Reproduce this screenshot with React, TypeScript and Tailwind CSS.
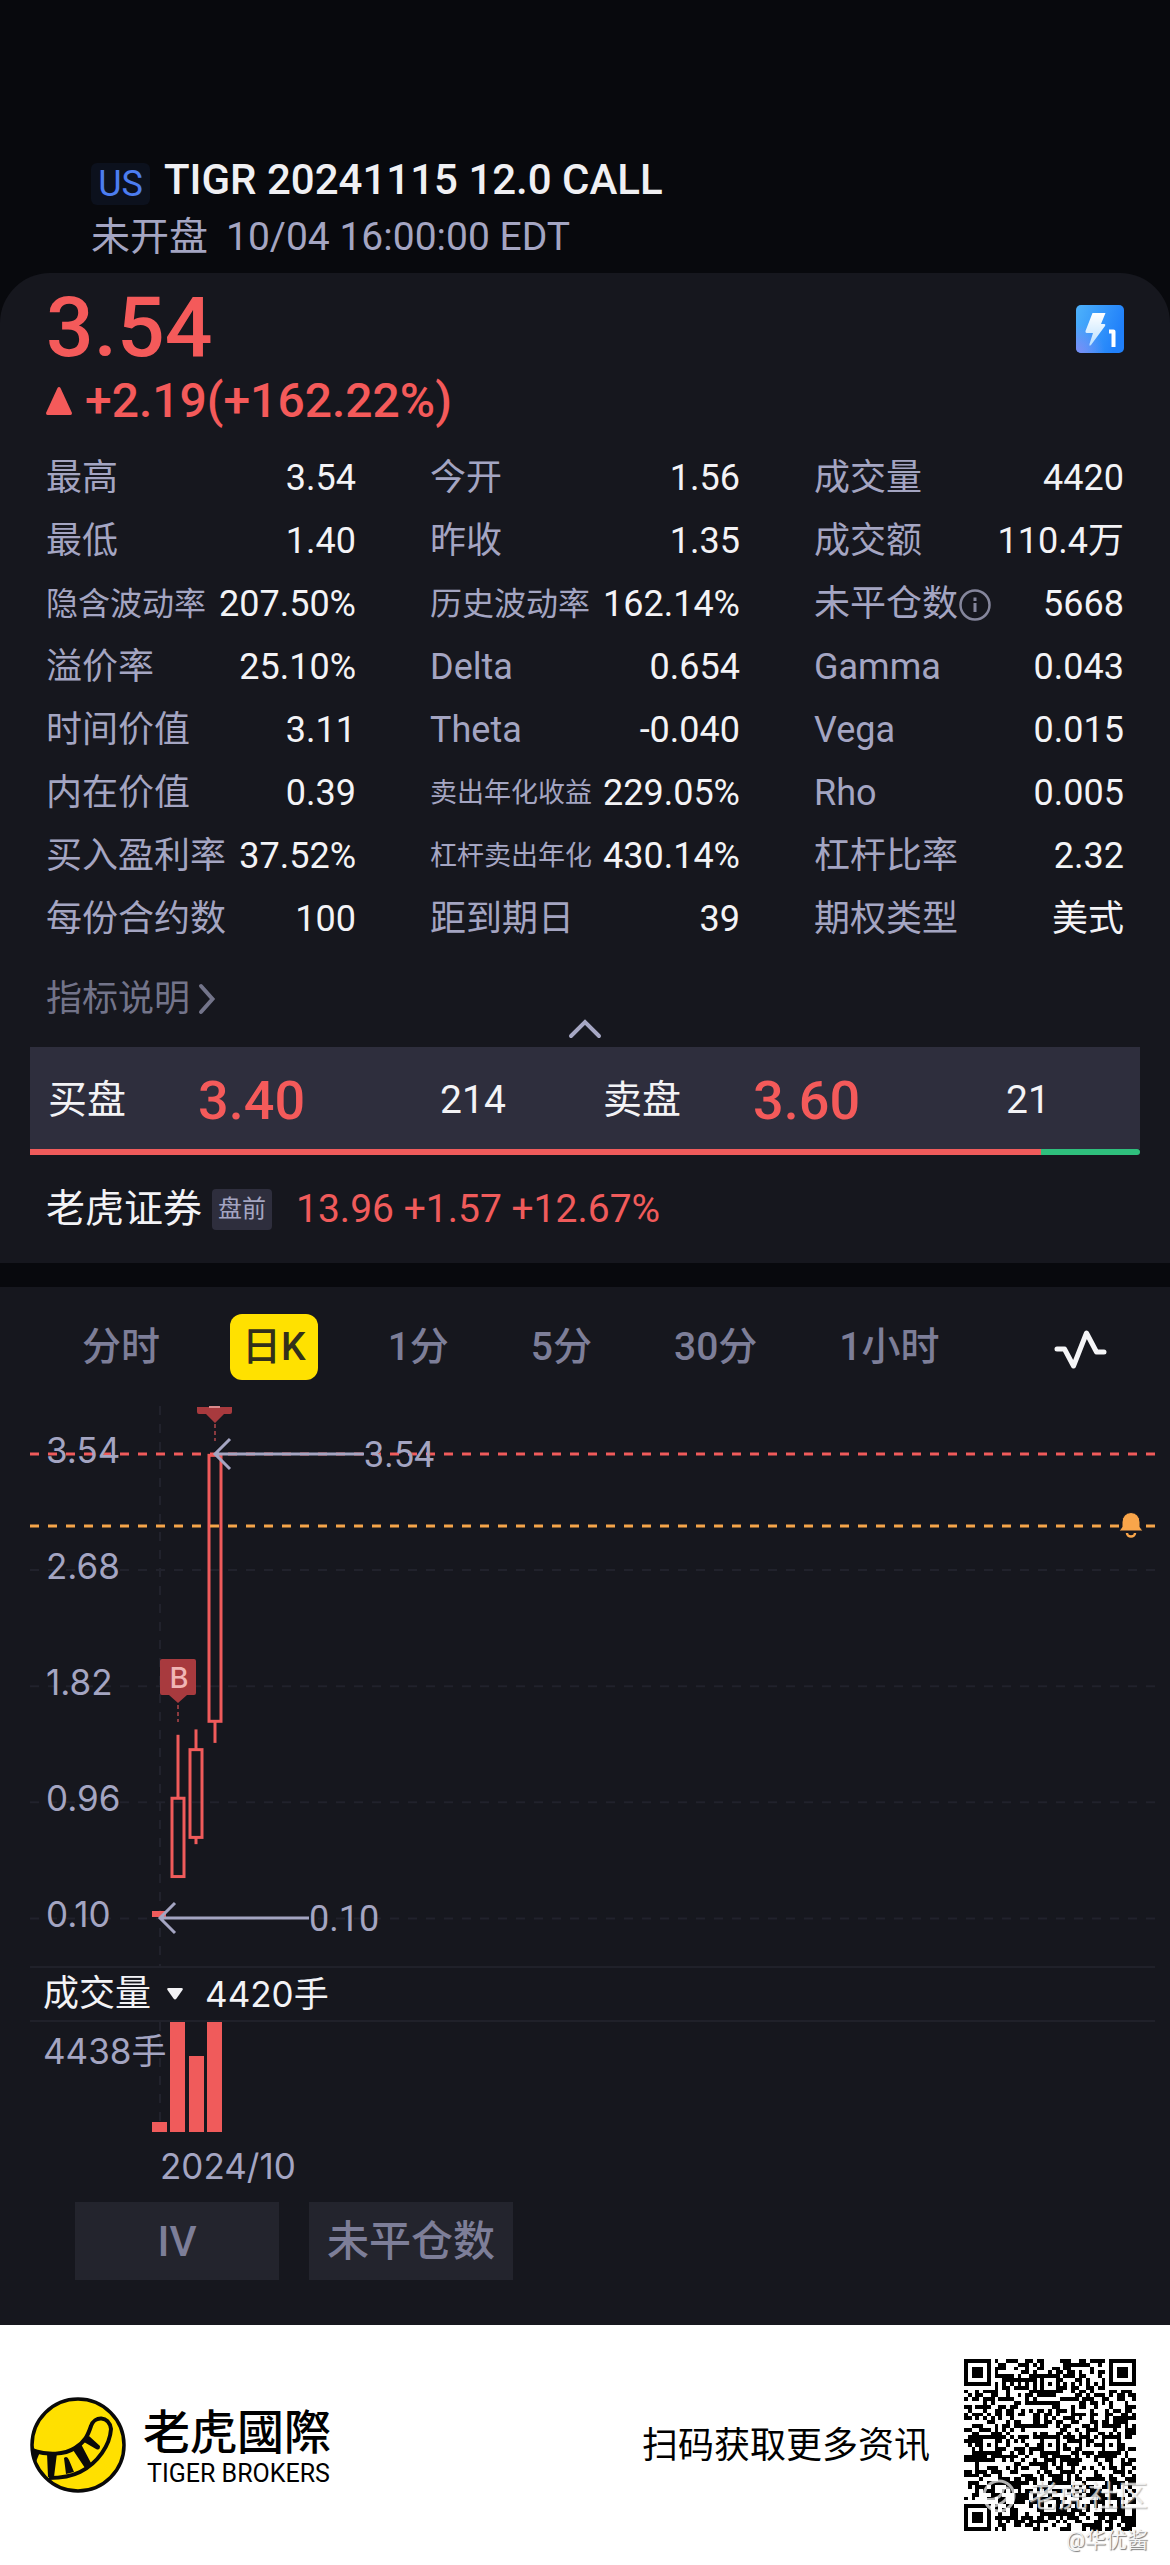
import React from "react";

type Stat = { label: string; value: string; size?: "md" | "sm"; info?: boolean };

const STATS: Stat[] = [
  { label: "最高", value: "3.54" },
  { label: "今开", value: "1.56" },
  { label: "成交量", value: "4420" },
  { label: "最低", value: "1.40" },
  { label: "昨收", value: "1.35" },
  { label: "成交额", value: "110.4万" },
  { label: "隐含波动率", value: "207.50%", size: "md" },
  { label: "历史波动率", value: "162.14%", size: "md" },
  { label: "未平仓数", value: "5668", info: true },
  { label: "溢价率", value: "25.10%" },
  { label: "Delta", value: "0.654" },
  { label: "Gamma", value: "0.043" },
  { label: "时间价值", value: "3.11" },
  { label: "Theta", value: "-0.040" },
  { label: "Vega", value: "0.015" },
  { label: "内在价值", value: "0.39" },
  { label: "卖出年化收益", value: "229.05%", size: "sm" },
  { label: "Rho", value: "0.005" },
  { label: "买入盈利率", value: "37.52%" },
  { label: "杠杆卖出年化", value: "430.14%", size: "sm" },
  { label: "杠杆比率", value: "2.32" },
  { label: "每份合约数", value: "100" },
  { label: "距到期日", value: "39" },
  { label: "期权类型", value: "美式" },
];

const LABEL_SIZE = { md: "text-[32px]", sm: "text-[27px]" };

const TABS = ["分时", "日K", "1分", "5分", "30分", "1小时"];

function Header() {
  return (
    <header className="px-[91px] pt-[155px] pb-3">
      <div className="flex items-end gap-[14px]">
        <span className="flex h-[42px] w-[59px] items-center justify-center rounded-md bg-[#0c111d] text-[36px] text-[#4c7df0]">
          US
        </span>
        <h1 className="text-[42px] leading-[50px] font-medium text-[#f0f0f3]">TIGR 20241115 12.0 CALL</h1>
      </div>
      <p className="mt-2 flex gap-[18px] text-[39px] leading-[48px] text-[#a4a5c2]">
        <span>未开盘</span>
        <span>10/04 16:00:00 EDT</span>
      </p>
    </header>
  );
}

function FlashBadge() {
  return (
    <svg viewBox="0 0 48 48" className="mt-[19px] size-12" role="img" aria-label="Level 1">
      <defs>
        <linearGradient id="flashBg" x1="0" y1="0" x2="1" y2="0.35">
          <stop offset="0" stopColor="#4eb2fb" />
          <stop offset="1" stopColor="#2080fa" />
        </linearGradient>
        <radialGradient id="flashGlow" cx="0" cy="1" r="0.6">
          <stop offset="0" stopColor="#7f8cf5" />
          <stop offset="1" stopColor="#7f8cf5" stopOpacity="0" />
        </radialGradient>
        <linearGradient id="flashBolt" x1="0" y1="0" x2="0" y2="1">
          <stop offset="0" stopColor="#ffffff" />
          <stop offset="1" stopColor="#b9e0ff" />
        </linearGradient>
      </defs>
      <rect width="48" height="48" rx="5" fill="url(#flashBg)" />
      <rect width="48" height="48" rx="5" fill="url(#flashGlow)" />
      <path
        d="M16.500 8H29.500L25 19H28.500Q30 19.500 29 21L15 40Q13 42 13.500 39L17 28H10.500Q9 27.500 9.500 26Z"
        fill="url(#flashBolt)"
      />
      <path d="M33 26.500H37.500V42" fill="none" stroke="#fff" strokeWidth="4" strokeLinejoin="round" />
    </svg>
  );
}

function InfoIcon() {
  return (
    <svg viewBox="0 0 34 34" className="size-[34px]" fill="none" stroke="#85869c" strokeWidth="2.500">
      <circle cx="17" cy="17" r="14.500" />
      <path d="M17 15V24" strokeWidth="3" />
      <path d="M17 9.500V13" strokeWidth="3" />
    </svg>
  );
}

function StatGrid() {
  return (
    <dl className="mt-4 grid grid-cols-3 gap-x-[74px] px-[46px] text-[36px] leading-[63px]">
      {STATS.map((s) => (
        <div key={s.label} className="flex items-center justify-between whitespace-nowrap">
          <dt className={`flex items-center text-[#a4a5c2] ${s.size ? LABEL_SIZE[s.size] : ""}`}>
            {s.label}
            {s.info && (
              <button type="button" aria-label="未平仓数说明">
                <InfoIcon />
              </button>
            )}
          </dt>
          <dd className="text-[#f3f3f6]">{s.value}</dd>
        </div>
      ))}
    </dl>
  );
}

function Quote({ label, price, size }: { label: string; price: string; size: string }) {
  return (
    <div className="flex flex-1 items-center pt-1 pl-[18px] text-[39px] text-[#f3f3f6]">
      <span className="w-[150px]">{label}</span>
      <span className="flex-1 text-[54px] font-medium text-[#f45a5a]">{price}</span>
      <span className="w-[224px] text-center">{size}</span>
    </div>
  );
}

function OrderBook() {
  const bid = 214;
  const ask = 21;
  return (
    <section className="mx-[30px]">
      <div className="flex h-[102px] bg-[#2e2e3d]">
        <Quote label="买盘" price="3.40" size={String(bid)} />
        <Quote label="卖盘" price="3.60" size={String(ask)} />
      </div>
      <div className="flex h-[6px] overflow-hidden rounded-r-full">
        <div className="bg-[#f05b5b]" style={{ flexGrow: bid }} />
        <div className="bg-[#2fbf7d]" style={{ flexGrow: ask }} />
      </div>
    </section>
  );
}

function Summary() {
  return (
    <main className="rounded-t-[50px] bg-[#16171e]">
      <div className="flex items-start justify-between px-[46px] pt-[13px]">
        <div className="text-[#f45a5a]">
          <p className="text-[84px] leading-[84px] font-medium">3.54</p>
          <p className="flex items-center gap-[13px] text-[48px] leading-[61px] font-medium">
            <svg viewBox="0 0 26 28" className="h-7 w-[26px]" fill="currentColor">
              <path d="M13 0Q14 0 14.500 1L26 26Q26 28 24.500 28H1.500Q0 28 0 26L11.500 1Q12 0 13 0Z" />
            </svg>
            +2.19(+162.22%)
          </p>
        </div>
        <FlashBadge />
      </div>
      <StatGrid />
      <div className="mt-[26px] px-[46px]">
        <button type="button" className="flex items-center gap-2 text-[36px] leading-[44px] text-[#73748a]">
          指标说明
          <svg viewBox="0 0 18 32" className="h-8 w-[18px]" fill="none" stroke="currentColor" strokeWidth="4" strokeLinecap="round">
            <path d="M3 3L14.500 16L3 29" />
          </svg>
        </button>
      </div>
      <button type="button" aria-label="收起" className="mx-auto -mt-[2px] mb-2 block">
        <svg viewBox="0 0 34 20" className="h-5 w-[34px]" fill="none" stroke="#a6a7c4" strokeWidth="4" strokeLinecap="round">
          <path d="M3 17L17 3L31 17" />
        </svg>
      </button>
      <OrderBook />
      <div className="flex items-center px-[46px] py-[30px] text-[39px] leading-[48px]">
        <span className="text-[#f3f3f6]">老虎证券</span>
        <span className="ml-[10px] flex h-[41px] w-[60px] items-center justify-center rounded-sm bg-[#2e2e3d] text-[24px] text-[#a4a5c2]">
          盘前
        </span>
        <span className="ml-6 text-[#f05b5b]">13.96 +1.57 +12.67%</span>
      </div>
    </main>
  );
}

function Tabs() {
  return (
    <nav className="flex items-center justify-between pt-[27px] pr-[60px] pb-5 pl-[70px]">
      <div className="flex gap-[58px]">
        {TABS.map((t) => (
          <button
            key={t}
            type="button"
            className={
              t === "日K"
                ? "rounded-xl bg-[#ffe100] px-3 text-[39px] leading-[66px] font-medium text-[#33301a]"
                : "px-3 text-[39px] leading-[66px] font-medium text-[#7d7e98]"
            }
          >
            {t}
          </button>
        ))}
      </div>
      <button type="button" aria-label="指标">
        <svg viewBox="0 0 60 44" className="h-11 w-[60px]" fill="none" stroke="#f5f5f7" strokeWidth="5" strokeLinecap="round" strokeLinejoin="round">
          <path d="M7 24H14.500L23.500 41L36.500 8L46.500 27H54" />
        </svg>
      </button>
    </nav>
  );
}

const AXIS = [3.54, 2.68, 1.82, 0.96, 0.1];
const GRID = "#262732";
const RED = "#f05b5b";
const priceY = (p: number) => 54 + (3.54 - p) * 135;

const CANDLES = [
  { x: 178, high: 1.46, top: 0.99, bottom: 0.41, low: 0.41 },
  { x: 196, high: 1.5, top: 1.35, bottom: 0.7, low: 0.65 },
  { x: 215, high: 3.54, top: 3.53, bottom: 1.56, low: 1.4 },
];

function PriceChart() {
  return (
    <svg viewBox="0 0 1170 566" className="block w-full" role="img" aria-label="日K线图">
      <g stroke={GRID} strokeWidth="2" strokeDasharray="9 9" opacity="0.700">
        {AXIS.map((p) => (
          <line key={p} x1="30" x2="1155" y1={priceY(p)} y2={priceY(p)} />
        ))}
        <line x1="160" x2="160" y1="6" y2="566" />
      </g>
      <g fill="none" stroke={RED} strokeWidth="3">
        {CANDLES.map((c) => (
          <g key={c.x}>
            <line x1={c.x} x2={c.x} y1={priceY(c.high)} y2={priceY(c.top)} />
            <rect x={c.x - 6} y={priceY(c.top)} width="12" height={priceY(c.bottom) - priceY(c.top)} />
            <line x1={c.x} x2={c.x} y1={priceY(c.bottom)} y2={priceY(c.low)} />
          </g>
        ))}
      </g>
      <rect x="152" y="511" width="14" height="6" fill={RED} />
      <line x1="30" x2="1155" y1="54" y2="54" stroke={RED} strokeWidth="3" strokeDasharray="9 9" />
      <line x1="30" x2="1155" y1="126" y2="126" stroke="#f5a54a" strokeWidth="3" strokeDasharray="9 9" />
      <g fill="#a4a5c2" className="font-['Inter',sans-serif] text-[35px]">
        {AXIS.map((p) => (
          <text key={p} x="46" y={priceY(p) + 9}>
            {p.toFixed(2)}
          </text>
        ))}
      </g>
      <g fill="#a4a5c2" className="text-[36px]">
        <text x="364" y="67">3.54</text>
        <text x="309" y="531">0.10</text>
      </g>
      <g fill="none" stroke="#a4a5c2" strokeWidth="3">
        <path d="M364 54H216M230 39L215 54L230 69" />
        <path d="M309 518H161M175 503L160 518L175 533" />
      </g>
      <path d="M197 7H232V12Q232 14 230 14H224L215 23L206 14H199Q197 14 197 12Z" fill="#a83a3e" />
      <path d="M209 7H220" stroke="#d98a8c" strokeWidth="2" />
      <path d="M162 259H194Q196 259 196 261V293Q196 295 194 295H187L178 303L169 295H162Q160 295 160 293V261Q160 259 162 259Z" fill="#a83a3e" />
      <g stroke="#8a3a3f" strokeWidth="2" strokeDasharray="4 3">
        <line x1="178" x2="178" y1="305" y2="322" />
        <line x1="215" x2="215" y1="24" y2="41" />
      </g>
      <text x="179" y="288" textAnchor="middle" fill="#f0b5b5" className="font-['Inter',sans-serif] text-[29px] font-medium">
        B
      </text>
      <path d="M1119 131L1122 127V122A9 9.500 0 0 1 1140 122V127L1143 131Z" fill="#f9a54a" stroke="#16171e" strokeWidth="1" />
      <path d="M1127 133A4 3.500 0 0 0 1135 133" fill="none" stroke="#f9a54a" strokeWidth="2.500" />
    </svg>
  );
}

const VOLUMES = [
  { x: 152, h: 10 },
  { x: 170, h: 110 },
  { x: 189, h: 76 },
  { x: 207, h: 110 },
];

function VolumeChart() {
  return (
    <>
      <div className="mr-[15px] ml-[30px] flex h-[56px] items-center border-y-2 border-[#20212a] pl-[13px] text-[36px] text-[#f3f3f6]">
        <button type="button" className="flex items-center gap-4">
          成交量
          <svg viewBox="0 0 16 12" className="h-3 w-4" fill="currentColor">
            <path d="M1.500 0H14.500Q16.500 0 15.500 2L9.500 10.500Q8 12.500 6.500 10.500L0.500 2Q-0.500 0 1.500 0Z" />
          </svg>
        </button>
        <span className="ml-[22px] font-['Inter','Noto_Sans_CJK_SC',sans-serif] text-[35px]">4420手</span>
      </div>
      <svg viewBox="0 0 1170 170" className="block w-full" role="img" aria-label="成交量图">
        <line x1="160" x2="160" y1="0" y2="110" stroke={GRID} strokeWidth="2" strokeDasharray="9 9" opacity="0.700" />
        <g fill="#a4a5c2" className="font-['Inter','Noto_Sans_CJK_SC',sans-serif] text-[35px]">
          <text x="43" y="42">4438手</text>
          <text x="160" y="157">2024/10</text>
        </g>
        {VOLUMES.map((v) => (
          <rect key={v.x} x={v.x} y={110 - v.h} width="15" height={v.h} fill={RED} />
        ))}
      </svg>
    </>
  );
}

function ChartSection() {
  return (
    <section className="mt-6 bg-[#16171e] pb-[45px]">
      <Tabs />
      <PriceChart />
      <VolumeChart />
      <div className="mt-[10px] flex gap-[30px] px-[75px]">
        {["IV", "未平仓数"].map((t) => (
          <button key={t} type="button" className="h-[78px] w-[204px] bg-[#23242d] text-[42px] font-medium text-[#7d7e98]">
            {t}
          </button>
        ))}
      </div>
    </section>
  );
}

function TigerLogo() {
  return (
    <svg viewBox="0 0 96 96" className="size-24" role="img" aria-label="Tiger Brokers">
      <circle cx="48" cy="48" r="46" fill="#ffe000" stroke="#0a0a0a" strokeWidth="3.500" />
      <path
        d="M4 54C18 58 34 58 45 51C55 45 58 38 61 29C64 19 79 18 81 32C80 48 68 66 50 75C40 80 30 81 19 81"
        fill="none"
        stroke="#0a0a0a"
        strokeWidth="4"
        strokeLinejoin="round"
      />
      <path
        d="M2 50L10 55L5 67ZM17 56H27L24 80H18ZM34 61Q37 58 39 63L44 75L36 77ZM43 53L51 47L61 66L55 71ZM54 45L59 39L70 49Q70 54 66 52Z"
        fill="#0a0a0a"
      />
    </svg>
  );
}

const QR_SIZE = 45;

/** Function patterns plus a seeded fill for the data area. */
function buildQr(): string {
  let seed = 20241115;
  const random = () => {
    seed = (seed * 1103515245 + 12345) % 2147483648;
    return seed / 2147483648;
  };
  const ring = (dx: number, dy: number) => Math.max(Math.abs(dx), Math.abs(dy));
  const finders = [
    [3, 3],
    [QR_SIZE - 4, 3],
    [3, QR_SIZE - 4],
  ];
  const aligns = [
    [22, 6],
    [6, 22],
    [22, 22],
    [38, 22],
    [22, 38],
    [38, 38],
  ];
  let d = "";
  for (let y = 0; y < QR_SIZE; y++) {
    for (let x = 0; x < QR_SIZE; x++) {
      let on = random() < 0.5;
      if (x === 6) on = y % 2 === 0;
      if (y === 6) on = x % 2 === 0;
      for (const [cx, cy] of aligns) {
        const r = ring(x - cx, y - cy);
        if (r <= 2) on = r !== 1;
      }
      for (const [cx, cy] of finders) {
        const r = ring(x - cx, y - cy);
        if (r <= 4) on = r !== 2 && r !== 4;
      }
      if (on) d += `M${x} ${y}h1v1h-1z`;
    }
  }
  return d;
}

const QR_PATH = buildQr();

function Footer() {
  return (
    <footer className="flex h-[240px] items-start justify-between bg-white pr-[34px] pl-[30px] text-black">
      <div className="mt-[72px] flex items-start gap-[17px]">
        <TigerLogo />
        <div className="mt-[7px]">
          <p className="font-['Noto_Sans_CJK_TC',sans-serif] text-[47px] leading-[50px] font-medium">老虎國際</p>
          <p className="mt-1 pl-1 text-[25px] leading-[32px]">TIGER BROKERS</p>
        </div>
      </div>
      <div className="flex items-start gap-[34px]">
        <p className="mt-[97px] text-[36px] leading-[48px]">扫码获取更多资讯</p>
        <div className="relative mt-[34px]">
          <svg viewBox="0 0 45 45" className="size-[172px]" shapeRendering="crispEdges" role="img" aria-label="二维码">
            <path d={QR_PATH} />
          </svg>
          <div className="absolute top-[119px] -right-3 flex items-center gap-3 text-[30px] leading-[36px] whitespace-nowrap text-white/70 [text-shadow:1px_1px_1px_#8888]">
            <svg viewBox="0 0 34 34" className="size-[34px]" fill="none" stroke="currentColor" strokeWidth="3">
              <circle cx="17" cy="17" r="15" />
              <path d="M3 20C12 22 20 18 21 11C23 7 28 9 27 14C25 22 17 27 8 28" />
            </svg>
            老虎社区
          </div>
          <div className="absolute top-[169px] -right-3 text-[21px] leading-[24px] whitespace-nowrap text-[#f4f4f4] [text-shadow:1px_1px_1px_#777]">
            @华优酱
          </div>
        </div>
      </div>
    </footer>
  );
}

export default function App() {
  return (
    <div className="min-h-screen bg-[#08090d] font-['Roboto','Noto_Sans_CJK_SC',sans-serif]">
      <Header />
      <Summary />
      <ChartSection />
      <Footer />
    </div>
  );
}
